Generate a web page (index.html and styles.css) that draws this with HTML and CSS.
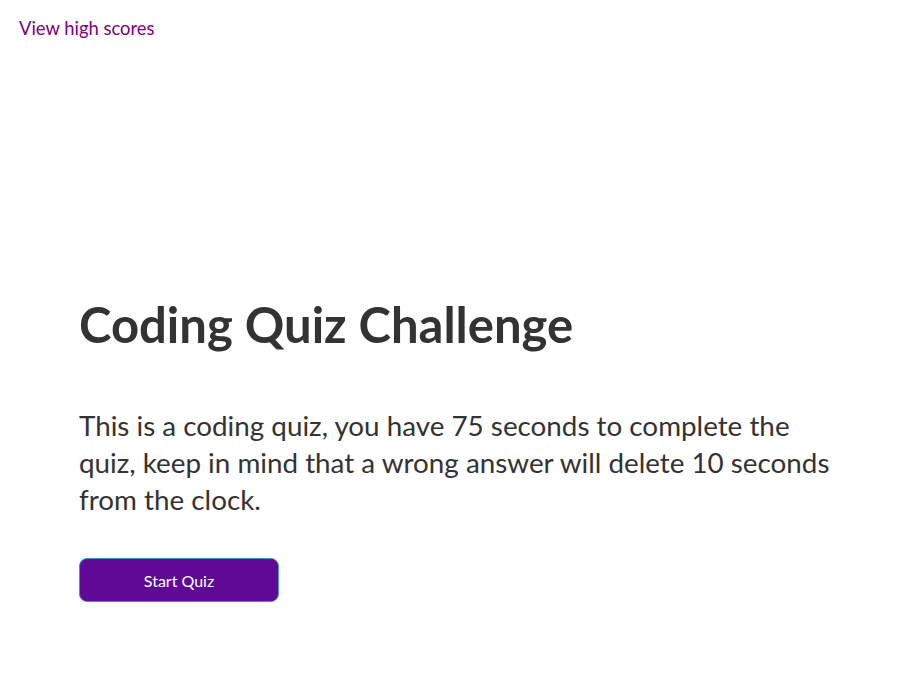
FILE: index.html
```html
<!DOCTYPE html>
<html lang="en">
<head>
<meta charset="utf-8">
<title>Coding Quiz</title>
<link rel="stylesheet" href="styles.css">
</head>
<body>
<header class="top">
  <a class="scores-link" href="#">View high scores</a>
</header>
<main class="intro">
  <h1 class="title">Coding Quiz Challenge</h1>
  <p class="lead">This is a coding quiz, you have 75 seconds to complete the quiz, keep in mind that a wrong answer will delete 10 seconds from the clock.</p>
  <button class="start-btn" type="button">Start Quiz</button>
</main>
</body>
</html>
```
FILE: styles.css
```css
html, body {
  margin: 0;
  padding: 0;
  background: #ffffff;
}
body {
  font-family: Lato, "Open Sans", sans-serif;
  color: #333333;
}
.top {
  display: flex;
  padding: 16px 19px 0;
}
.scores-link {
  color: #800080;
  text-decoration: none;
  font-size: 18.4px;
  line-height: 24px;
}
.intro {
  display: flex;
  flex-direction: column;
  align-items: flex-start;
  padding: 254px 79px 0;
}
.title {
  margin: 0;
  font-size: 49px;
  line-height: 60px;
  font-weight: 700;
}
.lead {
  margin: 53px 0 0;
  width: 758px;
  font-size: 27.8px;
  line-height: 37px;
}
.start-btn {
  margin-top: 40px;
  width: 200px;
  height: 44px;
  border: 1px solid #4a90d9;
  border-radius: 8px;
  background: #5f0a95;
  color: #ffffff;
  font-family: inherit;
  font-size: 16px;
}
```
